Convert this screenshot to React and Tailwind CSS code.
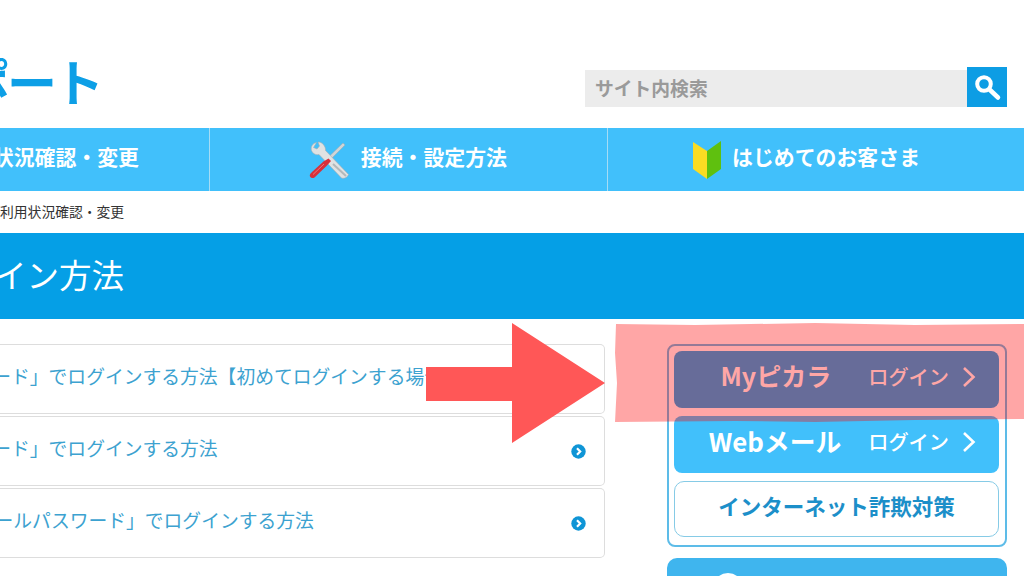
import React from "react";

const FONT = { fontFamily: '"Noto Sans CJK JP", "Noto Sans", sans-serif' };

function Dot() {
  return (
    <svg width="15" height="15" viewBox="0 0 15 15" className="shrink-0">
      <circle cx="7.5" cy="7.5" r="7.2" fill="#0f95d6" />
      <path d="M6 4.2 9.2 7.5 6 10.8" fill="none" stroke="#fff" strokeWidth="2.2" />
    </svg>
  );
}

function Row({ text, ml, dot }) {
  return (
    <div className="h-[70px] border border-[#dddddd] rounded-r-[5px] border-l-0 bg-white flex items-center justify-between pr-[18px] overflow-hidden">
      <span className={`whitespace-nowrap text-[18.8px] text-[#3ca2d0] leading-none -translate-y-[3px] ${ml}`}>{text}</span>
      {dot && <Dot />}
    </div>
  );
}

function Chevron() {
  return (
    <svg width="14" height="22" viewBox="0 0 14 22" className="shrink-0 -translate-y-[3px]">
      <path d="M2 2 11.5 11 2 20" fill="none" stroke="#fff" strokeWidth="2.6" />
    </svg>
  );
}

function Tools() {
  return (
    <svg width="40" height="38" viewBox="0 0 40 38" className="shrink-0">
      <path d="M34 2 L36 4 L21 19 L18.5 17Z" fill="#cfd5d8" stroke="#9fa7ab" strokeWidth="0.5" />
      <path d="M7.5 1.5 C3.5 2.2 1.5 6 2.5 9.5 C3.5 12.5 7 14.3 10 13.5 L32.5 37 C35 38 38.5 36.5 39.5 33.5 L16.5 9.5 C17 5 12.5 0.5 9 1 L10.5 5 L8 8 L4.5 6.5 Z" fill="#dfe2e3" stroke="#a8aeb1" strokeWidth="0.6" />
      <path d="M24 23 L37 35" stroke="#b3b8ba" strokeWidth="2" />
      <path d="M19.5 17.5 L22 20 L17.5 25 L5.5 36.5 C3 38 0 36 1 33.5 C1.5 32.5 2 32 3 31 L14.5 20.5Z" fill="#d8303a" />
      <path d="M4 33.5 L15 23" stroke="#f0737a" strokeWidth="1" />
    </svg>
  );
}

function Leaf() {
  return (
    <svg width="28" height="38" viewBox="0 0 28 38" className="shrink-0">
      <path d="M0 1 L14 10 L14 38 L0 28Z" fill="#fadc23" />
      <path d="M28 0 L14 10 L14 38 L28 28Z" fill="#5fc00f" />
    </svg>
  );
}

function Search() {
  return (
    <svg width="30" height="30" viewBox="0 0 30 30">
      <circle cx="12" cy="12" r="6.8" fill="none" stroke="#fff" strokeWidth="4" />
      <path d="M17.5 17.5 26 25.5" fill="none" stroke="#fff" strokeWidth="4.5" strokeLinecap="round" />
    </svg>
  );
}

function LoginButton({ title, bg, size }) {
  return (
    <div className={`h-[57px] rounded-[8px] flex items-center justify-end pr-[23px] text-white ${bg}`}>
      <span className={`font-bold leading-none whitespace-nowrap -translate-y-[4px] ${size}`}>{title}</span>
      <span className="font-medium text-[20.2px] leading-none whitespace-nowrap mr-[13px] -translate-y-[2px]">ログイン</span>
      <Chevron />
    </div>
  );
}

export default function App() {
  return (
    <div className="relative w-[1024px] h-[576px] overflow-hidden bg-white flex flex-col" style={FONT}>
      {/* header */}
      <header className="h-[128px] shrink-0 flex items-start justify-between pr-[17px]">
        <span className="ml-[-87px] mt-[46px] font-bold text-[50px] tracking-[-3px] leading-[68px] text-[#0d9fe6] whitespace-nowrap">サポート</span>
        <div className="mt-[67px] flex items-end">
          <div className="w-[382px] h-[37px] bg-[#ececec] flex items-center pl-[10px] text-[18.8px] font-bold text-[#9a9a9a] leading-none">サイト内検索</div>
          <div className="w-[40px] h-[40px] bg-[#0d9de4] flex items-center justify-center"><Search /></div>
        </div>
      </header>

      {/* nav */}
      <nav className="h-[63px] shrink-0 bg-[#41c0fb] flex text-white font-bold text-[20.9px] leading-none">
        <div className="w-[210px] shrink-0 border-r border-[#a5dcf5] flex items-center justify-end pr-[70px] whitespace-nowrap">
          <span className="-translate-y-[3px]">ご利用状況確認・変更</span>
        </div>
        <div className="w-[398px] shrink-0 border-r border-[#a5dcf5] flex items-center justify-end pr-[100px] gap-[12px] whitespace-nowrap">
          <Tools />
          <span className="-translate-y-[3px]">接続・設定方法</span>
        </div>
        <div className="flex-1 flex items-center pl-[85px] gap-[11px] whitespace-nowrap">
          <Leaf />
          <span className="-translate-y-[3px]">はじめてのお客さま</span>
        </div>
      </nav>

      {/* breadcrumb */}
      <div className="h-[42px] shrink-0 flex items-center text-[13.8px] text-[#333333] leading-none whitespace-nowrap">
        <span>利用状況確認・変更</span>
      </div>

      {/* title */}
      <div className="h-[86px] shrink-0 bg-[#059fe6] flex items-center text-white text-[32.5px] leading-none whitespace-nowrap">
        <span className="ml-[-71px] -translate-y-[2px]">ログイン方法</span>
      </div>

      {/* body */}
      <div className="flex flex-1 pt-[25px]">
        <div className="w-[605px] shrink-0 flex flex-col gap-[2px]">
          <Row text="「ログインパスワード」でログインする方法【初めてログインする場合】" ml="ml-[-158px]" />
          <Row text="「ログインパスワード」でログインする方法" ml="ml-[-158px]" dot />
          <Row text="「メールパスワード」でログインする方法" ml="ml-[-43px]" dot />
        </div>
        <div className="ml-[62px] w-[340px] shrink-0 flex flex-col">
          <div className="h-[203px] border-2 border-[#5dbce8] rounded-[8px] pl-[5px] pr-[6px] pt-[5px] flex flex-col gap-[8px]">
            <LoginButton title="Myピカラ" bg="bg-[#16a6ec]" size="text-[25px] mr-[37px]" />
            <LoginButton title="Webメール" bg="bg-[#41c0fb]" size="text-[25.8px] mr-[27px]" />
            <div className="h-[56px] border border-[#86cbe6] rounded-[10px] flex items-center justify-center font-bold text-[21.5px] text-[#1c8fc9] leading-none whitespace-nowrap">
              <span className="-translate-y-[3px]">インターネット詐欺対策</span>
            </div>
          </div>
          <div className="mt-[11px] h-[60px] rounded-[10px] bg-[#3fb5ee] pl-[46px] pt-[15px]">
            <div className="w-[30px] h-[30px] rounded-full bg-white" />
          </div>
        </div>
      </div>

      {/* pink highlight */}
      <svg className="absolute left-[615px] top-[323px]" width="409" height="100" viewBox="0 0 409 100">
        <path d="M1 1 L80 2 L200 0 L300 2 L409 1 L409 96 L300 97 L200 99 L120 98 L0 99 L2 60 L0 30Z" fill="#ff0000" fillOpacity="0.35" />
      </svg>

      {/* red arrow */}
      <svg className="absolute left-[426px] top-[323px]" width="179" height="120" viewBox="0 0 179 120">
        <path d="M0 44 H86 V0 L179 60 L86 120 V78 H0Z" fill="#ff5757" />
      </svg>
    </div>
  );
}
